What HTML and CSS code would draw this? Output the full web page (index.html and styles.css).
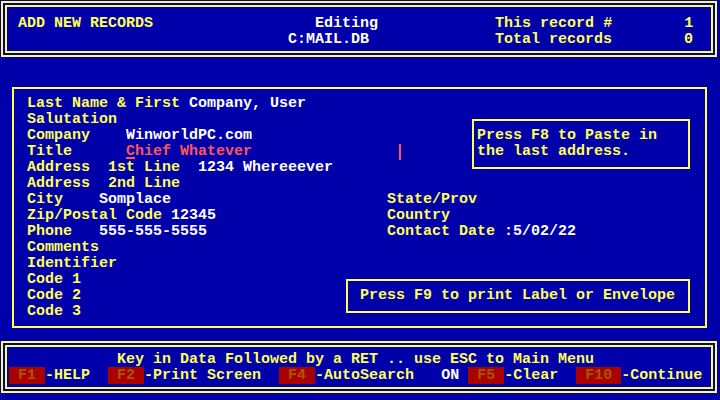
FILE: index.html
```html
<!DOCTYPE html>
<html>
<head>
<meta charset="utf-8">
<title>Add New Records</title>
<link rel="stylesheet" href="styles.css">
</head>
<body>
<div class="screen">
  <header class="dbl head">
<pre class="t"><span class="y">ADD NEW RECORDS</span>                  <span class="w">Editing</span>             <span class="y">This record #        1</span>
                              <span class="w">C:MAIL.DB</span>              <span class="y">Total records        0</span></pre>
  </header>
  <main class="form">
    <div class="grid">
<pre class="t left">Last Name &amp; First<span class="w"> Company, User</span>
Salutation
Company    <span class="w">WinworldPC.com</span>
Title      <span class="r"><span class="cursor">C</span>hief Whatever</span>
Address  1st Line  <span class="w">1234 Whereeever</span>
Address  2nd Line
City    <span class="w">Somplace</span>
Zip/Postal Code <span class="w">12345</span>
Phone   <span class="w">555-555-5555</span>
Comments
Identifier
Code 1
Code 2
Code 3</pre>
<pre class="t right">State/Prov
Country
Contact Date <span class="w">:5/02/22</span></pre>
      <div class="bar"></div>
      <div class="box f8"><pre class="t">Press F8 to Paste in
the last address.</pre></div>
      <div class="box f9"><pre class="t">Press F9 to print Label or Envelope</pre></div>
    </div>
  </main>
  <footer class="dbl foot">
<pre class="t">            Key in Data Followed by a RET .. use ESC to Main Menu
<span class="k"> F1 </span>-HELP  <span class="k"> F2 </span>-Print Screen  <span class="k"> F4 </span>-AutoSearch   <span class="w">ON</span> <span class="k"> F5 </span>-Clear  <span class="k"> F10 </span>-Continue</pre>
  </footer>
</div>
</body>
</html>
```
FILE: styles.css
```css
html, body {
  margin: 0;
  padding: 0;
  background: #0000aa;
}
body {
  width: 720px;
  height: 400px;
  overflow: hidden;
}
.screen {
  font-family: "Liberation Mono", "DejaVu Sans Mono", monospace;
  font-size: 15px;
  line-height: 16px;
  font-weight: bold;
  color: #ffff55;
  padding-top: 1px;
}
.t {
  margin: 0;
  font: inherit;
  white-space: pre;
}
.y { color: #ffff55; }
.w { color: #ffffff; }
.r { color: #ff5555; }
.cursor {
  display: inline-block;
  height: 16px;
  vertical-align: top;
  background: linear-gradient(to bottom, transparent 13px, #ff5555 13px, #ff5555 15px, transparent 15px);
}
.k {
  background: #aa0000;
  color: #aa5500;
}
.dbl {
  border: 6px double #ffff55;
  margin-left: 1px;
  width: 716px;
  box-sizing: border-box;
}
.head {
  height: 56px;
  padding: 9px 0 0 11px;
}
.form {
  margin: 30px 0 0 12px;
  width: 695px;
  height: 241px;
  box-sizing: border-box;
  border: 2px solid #ffff55;
  padding: 7px 0 0 13px;
}
.grid {
  display: grid;
  grid-template-columns: repeat(75, 9px);
  grid-template-rows: repeat(14, 16px);
}
.left {
  grid-column: 1 / span 35;
  grid-row: 1 / span 14;
}
.right {
  grid-column: 41 / span 25;
  grid-row: 7 / span 3;
}
.bar {
  grid-column: 42;
  grid-row: 4;
  width: 2px;
  margin-left: 3px;
  background: #ff5555;
}
.box {
  border: 2px solid #ffff55;
  margin: 7px 3px 7px 4px;
}
.f8 {
  grid-column: 50 / span 25;
  grid-row: 2 / span 4;
  padding: 7px 0 0 3px;
}
.f9 {
  grid-column: 36 / span 39;
  grid-row: 12 / span 3;
  padding: 7px 0 0 12px;
}
.foot {
  margin-top: 13px;
  height: 52px;
  padding: 5px 0 0 2px;
}
```
